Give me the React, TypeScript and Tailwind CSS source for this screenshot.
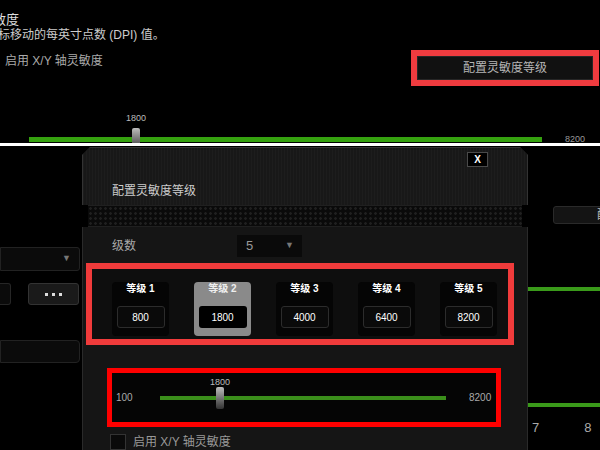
import React from "react";

const levels = [
  { name: "等级 1", value: "800" },
  { name: "等级 2", value: "1800", active: true },
  { name: "等级 3", value: "4000" },
  { name: "等级 4", value: "6400" },
  { name: "等级 5", value: "8200" },
];

const LevelCard = ({ name, value, active }: { name: string; value: string; active?: boolean }) => (
  <div
    className={`w-[57px] h-[54px] rounded-[4px] flex flex-col items-center ${
      active ? "bg-[#8a8a8a]" : "bg-[#050505]"
    }`}
  >
    <span className={`mt-[1px] text-[10px] leading-[12px] font-bold ${active ? "text-[#eeeeee]" : "text-white"}`}>
      {name}
    </span>
    <div
      className={`mt-[11px] w-[48px] h-[22px] rounded-[3px] flex items-center justify-center text-[10px] text-white ${
        active ? "bg-black" : "bg-[#0a0a0a] border border-[#2c2c2c]"
      }`}
    >
      {value}
    </div>
  </div>
);

const Thumb = () => (
  <div className="w-[8px] h-[22px] rounded-[2px] bg-gradient-to-b from-[#bdbdbd] via-[#777] to-[#333]" />
);

const App = () => {
  return (
    <div className="w-[600px] h-[450px] overflow-hidden bg-black font-['Liberation_Sans','Noto_Sans_CJK_SC',sans-serif]">
      {/* upper page */}
      <div className="h-[143px] overflow-hidden">
        <div className="pt-[12px] -ml-[7px] text-[13px] leading-[15px] text-[#dddddd]">敏度</div>
        <div className="mt-[1px] -ml-[2px] text-[12px] leading-[14px] text-[#cccccc]">标移动的每英寸点数 (DPI) 值。</div>
        <div className="mt-[8px] flex justify-between h-[36px]">
          <span className="pl-[5px] pt-[4px] text-[12px] leading-[14px] text-[#aaaaaa]">启用 X/Y 轴灵敏度</span>
          <div className="mr-[1px] w-[188px] border-[6px] border-[#ef3b3f]">
            <div className="h-full bg-[#111] border border-[#262626] flex items-center justify-center text-[12px] text-[#b5b5b5]">
              配置灵敏度等级
            </div>
          </div>
        </div>
        <div className="relative h-[57px]">
          <span className="absolute left-[126px] top-[26px] text-[9px] text-[#bbbbbb]">1800</span>
          <div className="absolute left-[29px] top-[51px] w-[513px] h-[5px] bg-[#35a10f]" />
          <div className="absolute left-[132px] top-[42px]">
            <Thumb />
          </div>
          <span className="absolute left-[565px] top-[47px] text-[9px] text-[#999999]">8200</span>
        </div>
      </div>
      <div className="h-[3px] bg-white" />

      {/* lower page with dialog */}
      <div className="flex h-[304px]">
        <div className="w-[82px] shrink-0 flex flex-col">
          <div className="mt-[101px] w-[80px] h-[24px] bg-[#0b0b0b] border border-[#222] rounded-r-[3px] flex items-center justify-end pr-[8px] text-[9px] text-[#777]">
            ▼
          </div>
          <div className="mt-[12px] flex h-[22px]">
            <div className="w-[11px] h-full bg-[#0b0b0b] border border-[#262626] border-l-0 rounded-r-[3px]" />
            <div className="ml-[17px] w-[51px] h-full bg-[#1a1a1a] border border-[#333] rounded-[3px] flex items-center justify-center gap-[4px]">
              <span className="w-[3px] h-[3px] bg-[#ddd]" />
              <span className="w-[3px] h-[3px] bg-[#ddd]" />
              <span className="w-[3px] h-[3px] bg-[#ddd]" />
            </div>
          </div>
          <div className="mt-[35px] w-[80px] h-[23px] bg-[#0b0b0b] border border-[#222] rounded-r-[4px]" />
        </div>

        <div className="w-[446px] shrink-0 flex flex-col">
          <div className="mt-[1px] h-[58px] bg-[#1b1b1b] bg-[repeating-linear-gradient(90deg,#1d1d1d_0px,#1d1d1d_1px,#181818_1px,#181818_3px)] border border-[#333] border-b-0 [clip-path:polygon(8px_0,calc(100%-8px)_0,100%_8px,100%_100%,0_100%,0_8px)] flex flex-col">
            <div className="mt-[4px] ml-auto mr-[39px] w-[21px] h-[15px] bg-black border border-[#4a4a4a] flex items-center justify-center text-[10px] font-bold text-white">
              X
            </div>
            <div className="mt-[17px] pl-[29px] text-[12px] leading-[14px] text-[#cccccc]">配置灵敏度等级</div>
          </div>
          <div className="h-[22px] mx-[6px] bg-[#0a0a0a] bg-[radial-gradient(circle,#1f1f1f_1px,transparent_1.6px)] bg-[length:5px_5px] border-y border-[#202020]" />
          <div className="flex-1 bg-[#151515] border-x border-[#2a2a2a] flex flex-col">
            <div className="mt-[8px] flex items-center">
              <span className="pl-[29px] w-[154px] text-[12px] leading-[14px] text-[#aaaaaa]">级数</span>
              <div className="w-[65px] h-[22px] bg-[#0a0a0a] flex items-center justify-between pl-[9px] pr-[8px]">
                <span className="text-[13px] text-[#999]">5</span>
                <span className="text-[9px] text-[#777]">▼</span>
              </div>
            </div>

            <div className="mt-[6px] ml-[3px] w-[428px] h-[82px] border-[6px] border-[#f03b3b] bg-[#0e0e0e] flex gap-[25px] pl-[20px] pt-[13px]">
              {levels.map((l) => (
                <LevelCard key={l.name} name={l.name} value={l.value} active={l.active} />
              ))}
            </div>

            <div className="mt-[23px] ml-[24px] w-[394px] h-[59px] border-[5px] border-[#ff0000] bg-[#050505] flex items-center">
              <span className="pl-[4px] w-[48px] text-[10px] text-[#aaaaaa]">100</span>
              <div className="relative w-[286px] h-[4px] bg-[#3b8f1b]">
                <span className="absolute left-[50px] top-[-19px] text-[9px] leading-[10px] text-[#bbbbbb]">1800</span>
                <div className="absolute left-[56px] top-[-9px]">
                  <Thumb />
                </div>
              </div>
              <span className="ml-[23px] text-[10px] text-[#aaaaaa]">8200</span>
            </div>

            <div className="mt-[7px] flex items-center">
              <div className="ml-[27px] w-[16px] h-[16px] bg-[#0a0a0a] border border-[#333]" />
              <span className="ml-[7px] text-[12px] leading-[14px] text-[#999999]">启用 X/Y 轴灵敏度</span>
            </div>
          </div>
        </div>

        <div className="flex-1 overflow-hidden flex flex-col">
          <div className="mt-[60px] ml-[25px] w-[120px] h-[18px] shrink-0 bg-[#141414] border border-[#2a2a2a] rounded-[3px] pl-[43px] text-[12px] leading-[16px] text-[#bbb] whitespace-nowrap">
            配置灵敏度等级
          </div>
          <div className="mt-[63px] h-[4px] bg-[#3a9a1a]" />
          <div className="mt-[112px] h-[4px] bg-[#3a9a1a]" />
          <div className="mt-[14px] flex text-[13px] leading-[14px] text-[#aaaaaa]">
            <span className="pl-[4px]">7</span>
            <span className="ml-[45px]">8</span>
          </div>
        </div>
      </div>
    </div>
  );
};

export default App;
